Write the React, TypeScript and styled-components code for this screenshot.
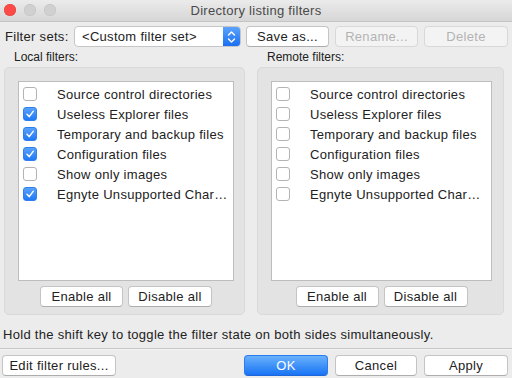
import React from "react";
import styled, { createGlobalStyle } from "styled-components";

const Global = createGlobalStyle`
  html, body { margin: 0; padding: 0; }
  body {
    background: #ececec;
    font-family: "Liberation Sans", Arial, sans-serif;
    font-size: 13px;
    letter-spacing: 0.3px;
    color: #222;
  }
`;

const Window = styled.div`
  width: 512px;
  height: 378px;
  display: flex;
  flex-direction: column;
  background: #ececec;
  overflow: hidden;
`;

const TitleBar = styled.div`
  height: 21px;
  flex: none;
  display: flex;
  align-items: center;
  position: relative;
  background: linear-gradient(#ebebeb, #d6d6d6);
  border-bottom: 1px solid #c4c4c4;
`;

const Lights = styled.div`
  display: flex;
  gap: 8px;
  padding-left: 4px;
  position: absolute;
  left: 0;
  top: 4px;
`;

const Light = styled.span<{ $color: string; $border: string }>`
  width: 12px;
  height: 12px;
  border-radius: 50%;
  background: ${(p) => p.$color};
  box-shadow: inset 0 0 0 0.5px ${(p) => p.$border};
`;

const Title = styled.div`
  flex: 1;
  text-align: center;
  color: #4a4a4a;
  font-size: 13px;
`;

const FilterRow = styled.div`
  display: flex;
  align-items: center;
  height: 21px;
  margin-top: 4px;
  padding-left: 5px;
`;

const RowLabel = styled.span`
  width: 69px;
  flex: none;
`;

const Select = styled.div`
  width: 167px;
  height: 21px;
  box-sizing: border-box;
  display: flex;
  border: 1px solid #c6c6c6;
  border-radius: 4px;
  background: #fff;
  overflow: hidden;
  margin-right: 5px;
`;

const SelectText = styled.span`
  flex: 1;
  padding-left: 7px;
  line-height: 19px;
`;

const SelectArrow = styled.span`
  width: 17px;
  flex: none;
  display: flex;
  align-items: center;
  justify-content: center;
  background: linear-gradient(#5ba3fb, #1a6ff2);
`;

const Button = styled.button<{ $w: number; $primary?: boolean }>`
  width: ${(p) => p.$w}px;
  height: 21px;
  box-sizing: border-box;
  padding: 0;
  font-family: inherit;
  font-size: 13px;
  letter-spacing: 0.3px;
  border-radius: 4px;
  border: 1px solid ${(p) => (p.$primary ? "#2b7cf0" : "#c4c4c4")};
  border-bottom-color: ${(p) => (p.$primary ? "#1f66d6" : "#adadad")};
  background: ${(p) =>
    p.$primary ? "linear-gradient(#69b1fb, #1973f5)" : "#fff"};
  color: ${(p) => (p.$primary ? "#fff" : "#222")};
  flex: none;
  &:disabled {
    color: #b3b3b3;
    border-color: #d8d8d8;
    background: #f3f3f3;
  }
`;

const Gap = styled.span<{ $w: number }>`
  width: ${(p) => p.$w}px;
  flex: none;
`;

const Panels = styled.div`
  display: grid;
  grid-template-columns: 241px 247px;
  column-gap: 12px;
  padding-left: 4px;
  margin-top: 3px;
`;

const Group = styled.div`
  display: flex;
  flex-direction: column;
`;

const GroupLabel = styled.div`
  font-size: 12px;
  letter-spacing: 0;
  line-height: 14px;
  padding-left: 10px;
  margin-bottom: 3px;
`;

const Panel = styled.div<{ $right: number }>`
  height: 248px;
  box-sizing: border-box;
  background: #e3e3e3;
  border: 1px solid #d9d9d9;
  border-radius: 5px;
  padding: 13px ${(p) => p.$right - 1}px 0 13px;
  display: flex;
  flex-direction: column;
`;

const ListBox = styled.div`
  height: 200px;
  box-sizing: border-box;
  background: #fff;
  border: 1px solid #bdbdbd;
  padding: 2px 4px 0 4px;
  display: flex;
  flex-direction: column;
`;

const Item = styled.div`
  height: 20px;
  display: flex;
  align-items: center;
  white-space: nowrap;
  overflow: hidden;
`;

const Box = styled.span<{ $on: boolean }>`
  width: 14px;
  height: 14px;
  box-sizing: border-box;
  border-radius: 3px;
  flex: none;
  margin-right: 20px;
  display: flex;
  align-items: center;
  justify-content: center;
  border: 1px solid ${(p) => (p.$on ? "#2f7ff0" : "#b3b3b3")};
  background: ${(p) => (p.$on ? "linear-gradient(#5aa2fb, #2078f4)" : "#fff")};
`;

const PanelButtons = styled.div`
  display: flex;
  justify-content: center;
  gap: 5px;
  margin-top: 5px;
`;

const Hint = styled.div`
  margin-top: 12px;
  padding-left: 3px;
  line-height: 15px;
`;

const Separator = styled.div`
  margin-top: 6px;
  height: 1px;
  background: #c6c6c6;
  border-bottom: 1px solid #f4f4f4;
`;

const Footer = styled.div`
  display: flex;
  align-items: center;
  margin-top: 5px;
  padding-left: 2px;
`;

const Spacer = styled.div`
  flex: 1;
`;

const Check = () => (
  <svg width="10" height="10" viewBox="0 0 10 10">
    <path d="M2 5.2 L4.2 7.6 L8.2 2.4" fill="none" stroke="#fff" strokeWidth="1.5" strokeLinecap="round" strokeLinejoin="round" />
  </svg>
);

const Arrows = () => (
  <svg width="9" height="14" viewBox="0 0 9 14">
    <path d="M1.5 5 L4.5 2 L7.5 5 M1.5 9 L4.5 12 L7.5 9" fill="none" stroke="#fff" strokeWidth="1.4" strokeLinecap="round" strokeLinejoin="round" />
  </svg>
);

type F = { label: string; on: boolean };

const local: F[] = [
  { label: "Source control directories", on: false },
  { label: "Useless Explorer files", on: true },
  { label: "Temporary and backup files", on: true },
  { label: "Configuration files", on: true },
  { label: "Show only images", on: false },
  { label: "Egnyte Unsupported Char…", on: true },
];

const remote: F[] = [
  { label: "Source control directories", on: false },
  { label: "Useless Explorer files", on: false },
  { label: "Temporary and backup files", on: false },
  { label: "Configuration files", on: false },
  { label: "Show only images", on: false },
  { label: "Egnyte Unsupported Char…", on: false },
];

const FilterGroup = ({ title, items, right }: { title: string; items: F[]; right: number }) => (
  <Group>
    <GroupLabel>{title}</GroupLabel>
    <Panel $right={right}>
      <ListBox>
        {items.map((it) => (
          <Item key={it.label}>
            <Box $on={it.on}>{it.on && <Check />}</Box>
            {it.label}
          </Item>
        ))}
      </ListBox>
      <PanelButtons>
        <Button $w={83}>Enable all</Button>
        <Button $w={84}>Disable all</Button>
      </PanelButtons>
    </Panel>
  </Group>
);

export default function App() {
  return (
    <Window>
      <Global />
      <TitleBar>
        <Lights>
          <Light $color="#fc4b47" $border="#e0443e" />
          <Light $color="#d0d0d0" $border="#c0c0c0" />
          <Light $color="#d0d0d0" $border="#c0c0c0" />
        </Lights>
        <Title>Directory listing filters</Title>
      </TitleBar>
      <FilterRow>
        <RowLabel>Filter sets:</RowLabel>
        <Select>
          <SelectText>&lt;Custom filter set&gt;</SelectText>
          <SelectArrow>
            <Arrows />
          </SelectArrow>
        </Select>
        <Button $w={83}>Save as...</Button>
        <Gap $w={6} />
        <Button $w={83} disabled>
          Rename...
        </Button>
        <Gap $w={6} />
        <Button $w={84} disabled>
          Delete
        </Button>
      </FilterRow>
      <Panels>
        <FilterGroup title="Local filters:" items={local} right={11} />
        <FilterGroup title="Remote filters:" items={remote} right={12} />
      </Panels>
      <Hint>Hold the shift key to toggle the filter state on both sides simultaneously.</Hint>
      <Separator />
      <Footer>
        <Button $w={114}>Edit filter rules...</Button>
        <Spacer />
        <Button $w={84} $primary>
          OK
        </Button>
        <Gap $w={7} />
        <Button $w={82}>Cancel</Button>
        <Gap $w={7} />
        <Button $w={84}>Apply</Button>
        <Gap $w={4} />
      </Footer>
    </Window>
  );
}
